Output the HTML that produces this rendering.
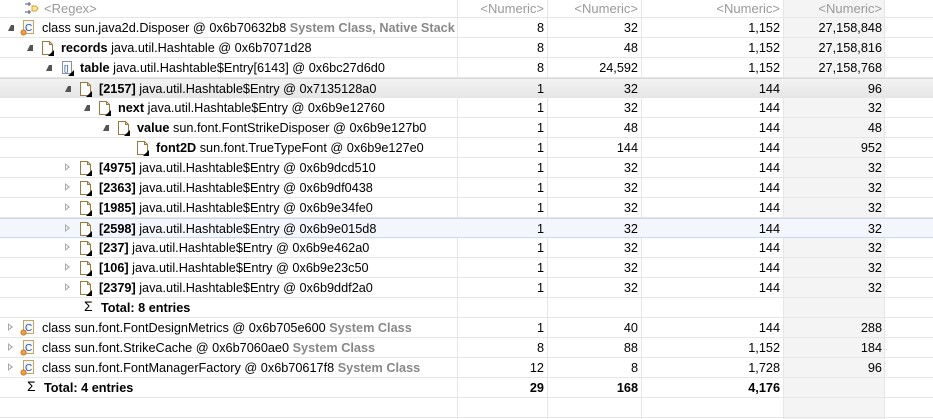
<!DOCTYPE html>
<html><head><meta charset="utf-8"><style>
*{margin:0;padding:0;box-sizing:border-box}
body{width:933px;height:419px;background:#fff;font-family:"Liberation Sans","DejaVu Sans",sans-serif;font-size:12.7px;color:#000;position:relative;overflow:hidden}
.r{position:absolute;left:0;width:933px;height:20px;border-bottom:1px solid #e6e6e6;white-space:nowrap}
.c4bg{position:absolute;left:784px;top:0;width:100px;height:419px;background:#f4f4f4}
.vl{position:absolute;top:0;width:1px;height:419px;background:#e6e6e6}
.t{position:absolute;top:3px;line-height:14px}
.n{position:absolute;top:3px;line-height:14px;text-align:right}
.g{color:#888;font-weight:bold}
.h{color:#999}
.arr{position:absolute;top:6px;width:0;height:0}
.open{border-left:3px solid transparent;border-bottom:6px solid #555;border-right:3px solid #555;width:0;height:0}
.closed{border-top:4px solid transparent;border-bottom:4px solid transparent;border-left:5px solid #aaa}
.closed:after{content:"";position:absolute;left:-4px;top:-2px;border-top:2px solid transparent;border-bottom:2px solid transparent;border-left:2px solid #fff}
svg{position:absolute;top:2px}
</style></head><body>
<div class="c4bg"></div>
<div class="vl" style="left:457px"></div>
<div class="vl" style="left:547px"></div>
<div class="vl" style="left:641px"></div>
<div class="vl" style="left:783px"></div>
<div class="vl" style="left:884px"></div>

<div class="r" style="top:0;height:18px;background:transparent">
<svg style="top:1px;left:23px" width="16" height="15" viewBox="0 0 16 15"><path d="M2 3h6M6 1v4M2 11h6M6 9v4" stroke="#557" fill="none"/><path d="M9 5h4l2 2.5-2 2.5H9z" stroke="#d9a020" fill="#fbe7a0"/></svg>
<span class="t h" style="left:44px;top:2px;font-size:13px">&lt;Regex&gt;</span>
<span class="n h" style="right:389px;top:2px;font-size:13px">&lt;Numeric&gt;</span>
<span class="n h" style="right:295px;top:2px;font-size:13px">&lt;Numeric&gt;</span>
<span class="n h" style="right:153px;top:2px;font-size:13px">&lt;Numeric&gt;</span>
<span class="n h" style="right:51px;top:2px;font-size:13px">&lt;Numeric&gt;</span>
</div>

<div id="rows"></div>
<script>
const rows=[
[0,'open','class','class sun.java2d.Disposer @ 0x6b70632b8 ','System Class, Native Stack',null,'8','32','1,152','27,158,848'],
[1,'open','file','','',['records',' java.util.Hashtable @ 0x6b7071d28'],'8','48','1,152','27,158,816'],
[2,'open','arr','','',['table',' java.util.Hashtable$Entry[6143] @ 0x6bc27d6d0'],'8','24,592','1,152','27,158,768'],
[3,'open','file','','',['[2157]',' java.util.Hashtable$Entry @ 0x7135128a0'],'1','32','144','96','sel'],
[4,'open','file','','',['next',' java.util.Hashtable$Entry @ 0x6b9e12760'],'1','32','144','32'],
[5,'open','file','','',['value',' sun.font.FontStrikeDisposer @ 0x6b9e127b0'],'1','48','144','48'],
[6,'','file','','',['font2D',' sun.font.TrueTypeFont @ 0x6b9e127e0'],'1','144','144','952'],
[3,'closed','file','','',['[4975]',' java.util.Hashtable$Entry @ 0x6b9dcd510'],'1','32','144','32'],
[3,'closed','file','','',['[2363]',' java.util.Hashtable$Entry @ 0x6b9df0438'],'1','32','144','32'],
[3,'closed','file','','',['[1985]',' java.util.Hashtable$Entry @ 0x6b9e34fe0'],'1','32','144','32'],
[3,'closed','file','','',['[2598]',' java.util.Hashtable$Entry @ 0x6b9e015d8'],'1','32','144','32','hov'],
[3,'closed','file','','',['[237]',' java.util.Hashtable$Entry @ 0x6b9e462a0'],'1','32','144','32'],
[3,'closed','file','','',['[106]',' java.util.Hashtable$Entry @ 0x6b9e23c50'],'1','32','144','32'],
[3,'closed','file','','',['[2379]',' java.util.Hashtable$Entry @ 0x6b9ddf2a0'],'1','32','144','32'],
[3,'','sum','','',['Total: 8 entries',''],'','','',''],
[0,'closed','class','class sun.font.FontDesignMetrics @ 0x6b705e600 ','System Class',null,'1','40','144','288'],
[0,'closed','class','class sun.font.StrikeCache @ 0x6b7060ae0 ','System Class',null,'8','88','1,152','184'],
[0,'closed','class','class sun.font.FontManagerFactory @ 0x6b70617f8 ','System Class',null,'12','8','1,728','96'],
[0,'','sum','','',['Total: 4 entries',''],'29','168','4,176','','tot'],
];
const FILE='<path d="M1.5 1.5h7l3 3v10h-10z" fill="#fff" stroke="#9a7a3a"/><path d="M8.5 1.5v3h3" fill="none" stroke="#9a7a3a"/><path d="M13 10v6h-6z" fill="#000"/>';
const CLS='<rect x="3.5" y="0.5" width="10" height="13" fill="#f3f6fb" stroke="#c9a55a"/><text x="5" y="11" font-size="10" fill="#2050b0" font-family="Liberation Sans">C</text><circle cx="3.5" cy="12.5" r="2.6" fill="#f0a040" stroke="#c06010" stroke-width=".7"/>';
const ARR='<rect x="1.5" y="1.5" width="9" height="12" fill="#fff" stroke="#8090b0"/><text x="3" y="11" font-size="8" fill="#2050b0" font-family="Liberation Sans">[]</text><path d="M13 10v6h-6z" fill="#000"/>';
let h='';
rows.forEach((r,i)=>{
 const top=18+i*20,L=r[0];
 let bg='';
 if(r[10]=='sel')bg='background:linear-gradient(#f2f2f2,#e6e6e6);border-top:1px solid #d8d8d8;';
 if(r[10]=='hov')bg='background:#f3f7fd;border-top:1px solid #c8d8ee;border-bottom:1px solid #c8d8ee;';
 h+=`<div class="r" style="top:${top}px;${bg}">`;
 const ax=10+L*19;
 if(r[1]=='open')h+=`<div class="arr open" style="left:${ax-2}px;top:7px"></div>`;
 if(r[1]=='closed')h+=`<div class="arr closed" style="left:${ax-2}px;top:5px"></div>`;
 const ix=23+L*19;
 let tx=ix+19;
 if(r[2]=='file')h+=`<svg style="left:${ix-1}px" width="15" height="17">${FILE}</svg>`;
 if(r[2]=='class')h+=`<svg style="left:${ix-3}px" width="16" height="16">${CLS}</svg>`;
 if(r[2]=='arr')h+=`<svg style="left:${ix}px" width="15" height="17">${ARR}</svg>`;
 if(r[2]=='sum'){h+=`<span class="t" style="left:${ix+4}px;top:1px;font-size:14px">&Sigma;</span>`;tx=ix+21;}
 if(r[5])h+=`<span class="t" style="left:${tx}px"><b>${r[5][0]}</b>${r[5][1].replace(/\$/g,'&#36;')}</span>`;
 else h+=`<span class="t" style="left:${tx}px">${r[3]}<span class="g">${r[4]}</span></span>`;
 const b=r[10]=='tot'?'font-weight:bold;':'';
 h+=`<span class="n" style="right:389px;${b}">${r[6]}</span><span class="n" style="right:295px;${b}">${r[7]}</span><span class="n" style="right:153px;${b}">${r[8]}</span><span class="n" style="right:51px;${b}">${r[9]}</span>`;
 h+='</div>';
});
h+='<div class="r" style="top:398px"></div>';
document.getElementById('rows').innerHTML=h;
</script>
</body></html>
